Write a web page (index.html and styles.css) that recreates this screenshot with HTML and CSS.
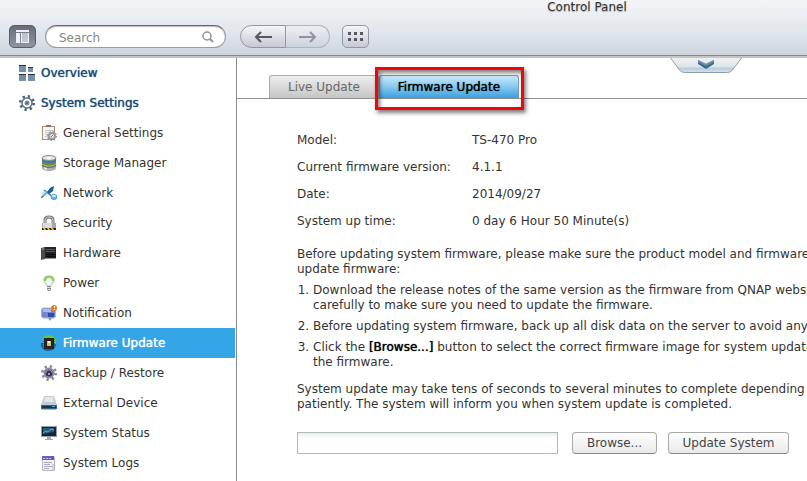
FILE: index.html
```html
<!DOCTYPE html>
<html lang="en">
<head>
    <meta charset="UTF-8">
    <meta name="viewport" content="width=device-width, initial-scale=1.0">
    <title>Control Panel</title>
    <link rel="stylesheet" href="styles.css">
</head>
<body>
    <div class="window">
        <header class="header">
            <h1 class="title">Control Panel</h1>
            <div class="toolbar">
                <button type="button" class="panel-toggle" aria-label="Toggle sidebar">
                    <svg width="13" height="13" viewBox="0 0 13 13"><path fill="#eef2f7" d="M0 0h13v2H0zM0 3h4v10H0zM5 3h1v9h6V3h1v10H5z"/><path fill="#dde2e9" d="M6 3h6v9H6z" opacity=".7"/></svg>
                </button>
                <div class="search">
                    <input type="text" class="search-input" placeholder="Search" aria-label="Search">
                    <svg class="search-icon" width="12" height="12" viewBox="0 0 12 12" fill="none" stroke="#8e9499"><circle cx="5" cy="5" r="4" stroke-width="1.500"/><path d="M8 8l3 3" stroke-width="2"/></svg>
                </div>
                <div class="history">
                    <button type="button" class="back" aria-label="Back">
                        <svg width="18" height="12" viewBox="0 0 18 12" fill="none" stroke="#53575e" stroke-width="2"><path d="M1.500 6H18M7 1L2 6l5 5"/></svg>
                    </button>
                    <button type="button" class="forward" aria-label="Forward">
                        <svg width="18" height="12" viewBox="0 0 18 12" fill="none" stroke="#90959d" stroke-width="2"><path d="M0 6h16.500M11 1l5 5-5 5"/></svg>
                    </button>
                </div>
                <button type="button" class="all-apps" aria-label="Show all">
                    <svg width="15" height="9" viewBox="0 0 15 9" fill="#55595f"><path d="M0 0h3v3H0zM6 0h3v3H6zM12 0h3v3h-3zM0 6h3v3H0zM6 6h3v3H6zM12 6h3v3h-3z"/></svg>
                </button>
            </div>
        </header>

        <div class="main">
            <nav class="sidebar">
                <a href="#" class="group">
                    <svg class="icon" viewBox="0 0 16 16"><path fill="#7590a8" d="M0 0h7v7H0zM9 2h5v5H9zM0 9h7v7H0zM9 9h7v7H9z"/><path fill="#27333e" d="M0 0h7v1H0zM9 2h5v1H9zM0 9h7v1H0zM9 9h7v1H9z"/></svg>
                    Overview
                </a>
                <a href="#" class="group">
                    <svg class="icon" viewBox="0 0 16 16" fill="none"><circle cx="8" cy="8" r="6.500" stroke="#4d6175" stroke-width="3" stroke-dasharray="2.200 2.905"/><circle cx="8" cy="8" r="5" stroke="#5f7488" stroke-width="1.500"/><circle cx="8" cy="8" r="2" stroke="#4d6175"/><circle cx="8" cy="8" r="1" fill="#27333e"/></svg>
                    System Settings
                </a>
                <a href="#" class="item">
                    <svg class="icon" viewBox="0 0 16 16"><path fill="#b28a70" d="M1 1h13v14H1z"/><path fill="#f4f4f2" d="M2 2h11v12H2z"/><path fill="#777" d="M5 0h5v2H5z"/><path stroke="#c6c9cc" d="M4 5.500h8M4 7.500h5M4 9.500h4M4 11.500h3"/><circle cx="11" cy="11" r="3" fill="#eee" stroke="#999" stroke-width="2"/><circle cx="11" cy="11" r="4.500" fill="none" stroke="#777" stroke-dasharray="1.500 2.034"/><path stroke="#666" d="M10 12l2-2"/></svg>
                    General Settings
                </a>
                <a href="#" class="item">
                    <svg class="icon" viewBox="0 0 16 16"><path fill="#a9aeb1" d="M1 3v10c0 4 14 4 14 0V3z"/><path fill="#d39b24" d="M1 7v2c0 3 14 3 14 0V7z"/><path fill="#5a9a30" d="M1 5v3c0 3 14 3 14 0V5z"/><path fill="#4973aa" d="M1 4v2c0 3 14 3 14 0V4z"/><path fill="none" stroke="#55595c" d="M1 10c0 3 14 3 14 0"/><path fill="#e2e4e5" d="M3 12l3 1v2l-3-1z"/><ellipse cx="8" cy="3" rx="7" ry="2.500" fill="#e0e3e4" stroke="#8b8f92"/><ellipse cx="8" cy="3" rx="2" ry="1" fill="#fff"/></svg>
                    Storage Manager
                </a>
                <a href="#" class="item">
                    <svg class="icon" viewBox="0 0 16 16"><path fill="none" stroke="#2e73ac" stroke-width="1.500" d="M0 13L12 2M3 5l9 7"/><path fill="#91c9ed" d="M2 7l3-2 3 3-4 3H0z" opacity=".6"/><path fill="#1e5f99" d="M9 3l4-2-1 5-4 3-2-1z"/><ellipse cx="13" cy="12" rx="3" ry="2.500" fill="#69b8e8" stroke="#4a98d4"/><ellipse cx="13" cy="11" rx="2" ry="1" fill="#d5effc"/></svg>
                    Network
                </a>
                <a href="#" class="item">
                    <svg class="icon" viewBox="0 0 16 16"><path fill="none" stroke="#75797c" stroke-width="3" d="M4 9V5c0-4 8-4 8 0v4"/><path fill="none" stroke="#d5d7d8" d="M4 9V5c0-4 8-4 8 0v4"/><path fill="#a7aaac" d="M1 8h14v7H1z"/><path fill="#d8dadb" d="M2 8h9v5H2z"/><path fill="#26231d" d="M1 13h14v2H1z"/><path fill="#f1bb20" d="M2 13h2l1 2H3zM6 13h2l1 2H7zM10 13h2l1 2h-2z"/></svg>
                    Security
                </a>
                <a href="#" class="item">
                    <svg class="icon" viewBox="0 0 16 16"><path fill="#4a4c4e" d="M0 3l4-1v12l-4 1z"/><path fill="#a2a4a6" d="M1 4l2-1v1L1 5z"/><path fill="#222426" d="M4 2h11v12H4z"/><path stroke="#56595b" d="M5 4.500h9M5 6.500h9"/><path stroke="#111" d="M5 9.500h10M5 11.500h10M8 8v5M11 8v5"/><path fill="#919395" d="M4 13h11v1H4z"/></svg>
                    Hardware
                </a>
                <a href="#" class="item">
                    <svg class="icon" viewBox="0 0 16 16"><path fill="#8ed165" stroke="#8cc46e" d="M8 1C4 1 3 3 3 5c0 2 2 4 3 6h4c1-2 3-4 3-6 0-2-1-4-5-4z"/><path fill="#d9dcd8" d="M3 6h10c0 2-2 4-3 6H6C5 10 3 8 3 6z"/><path fill="#f3fbed" d="M8 3C6 3 5 4 5 6c0 1 1 3 2 4h2c1-1 2-3 2-4 0-2-1-3-3-3z"/><path fill="#858a86" d="M6 11h4v3l-1 2H7l-1-2z"/><path stroke="#dedede" d="M6 12.500h4M7 14.500h2"/></svg>
                    Power
                </a>
                <a href="#" class="item">
                    <svg class="icon" viewBox="0 0 16 16"><rect x="0.500" y="3" width="14" height="10" rx="2" fill="#7187cf" stroke="#aab5d8"/><path fill="#a9beef" d="M2 4h8v3H2z"/><path fill="#334aa8" d="M7 8h6v4H7z"/><path fill="#8994b5" d="M7 13h4l-2 3z"/><circle cx="13" cy="3" r="3" fill="#f07c1c"/><path stroke="#fff" d="M13.500 1v2M13.500 4v1"/></svg>
                    Notification
                </a>
                <a href="#" class="item selected">
                    <svg class="icon" viewBox="0 0 16 16"><path fill="none" stroke="#72c740" stroke-width="2" d="M2 5c2-5 9-5 12 0v3"/><path fill="none" stroke="#17639b" stroke-width="2" d="M14 9c-1 7-10 8-13 2V8"/><rect x="3" y="3" width="10" height="11" fill="#27231e"/><path stroke="#79674a" stroke-dasharray="1 1" d="M2.500 4v9M13.500 4v9"/><path fill="#d7b982" d="M6 6h4v5H6z"/><path fill="#fff0cb" d="M7 6h2v2H7z"/></svg>
                    Firmware Update
                </a>
                <a href="#" class="item">
                    <svg class="icon" viewBox="0 0 16 16" fill="none"><circle cx="8" cy="8" r="6.500" stroke="#888a92" stroke-width="3" stroke-dasharray="2.200 2.905"/><circle cx="8" cy="8" r="4.500" fill="#343154" stroke="#8e9099" stroke-width="2"/><path stroke="#8f86cc" d="M5 8a3 3 0 0 1 6 0"/><circle cx="8" cy="9" r="1" fill="#c5c0ed"/></svg>
                    Backup / Restore
                </a>
                <a href="#" class="item">
                    <svg class="icon" viewBox="0 0 16 16"><path fill="#c3ccd5" d="M3 1h10l3 9H0z"/><path fill="#e2e7ec" d="M4 2h8l1 5H3z"/><path fill="#3e6282" d="M0 10h16v4H0z"/><path fill="#18344e" d="M1 11h14v2H1z"/><path fill="#4ca8d8" d="M11 11h3v1h-3z"/><path fill="#adb7c0" d="M1 14h14v1H1z"/></svg>
                    External Device
                </a>
                <a href="#" class="item">
                    <svg class="icon" viewBox="0 0 16 16"><path fill="#969da3" d="M0 1h16v11H0z"/><path fill="#182532" d="M1 2h14v9H1z"/><path fill="#225d83" d="M2 3h11v4L2 9z"/><path fill="none" stroke="#40bcc5" d="M2 8l3-2 2 1 3-3 3 1"/><path fill="#a6abae" d="M6 12h4v2H6zM4 14h8v1H4z"/></svg>
                    System Status
                </a>
                <a href="#" class="item">
                    <svg class="icon" viewBox="0 0 16 16"><path fill="#f0f0f5" stroke="#b4b4c2" d="M1.500 2v13.500h12V2z"/><path fill="#7358bd" d="M1 1h12v4H1z"/><path stroke="#c8bae9" stroke-dasharray="2 1" d="M2 3.500h9"/><path stroke="#a9acb8" d="M3 7.500h8M3 9.500h6M3 11.500h8M3 13.500h5"/><path fill="#d0d1dc" d="M11 9h2v6h-2z"/></svg>
                    System Logs
                </a>
            </nav>

            <main class="content">
                <button type="button" class="drawer" aria-label="Expand">
                    <svg width="72" height="16" viewBox="0 0 72 16">
                        <defs>
                            <linearGradient id="drawer-fill" x2="0" y2="1">
                                <stop offset="0" stop-color="#eef1f3"/>
                                <stop offset=".6" stop-color="#dde5ea"/>
                                <stop offset=".7" stop-color="#b9cbd8"/>
                                <stop offset="1" stop-color="#d5e2eb"/>
                            </linearGradient>
                        </defs>
                        <path fill="url(#drawer-fill)" stroke="#8b9eae" d="M.500 0l9 12q2 2.500 5 2.500h43q3 0 5-2.500l9-12"/>
                        <path fill="#376c91" d="M28 2l8 4 8-4v4l-8 5-8-5z"/>
                        <path fill="#718d9e" d="M28 2l8 4 8-4v2l-8 4-8-4z"/>
                    </svg>
                </button>

                <div class="tabs">
                    <button type="button" class="tab">Live Update</button>
                    <div class="marked">
                        <button type="button" class="tab active">Firmware Update</button>
                    </div>
                </div>

                <div class="page">
                    <dl class="info">
                        <dt>Model:</dt>
                        <dd>TS-470 Pro</dd>
                        <dt>Current firmware version:</dt>
                        <dd>4.1.1</dd>
                        <dt>Date:</dt>
                        <dd>2014/09/27</dd>
                        <dt>System up time:</dt>
                        <dd>0 day 6 Hour 50 Minute(s)</dd>
                    </dl>

                    <p>Before updating system firmware, please make sure the product model and firmware<br>update firmware:</p>
                    <ol class="steps">
                        <li>Download the release notes of the same version as the firmware from QNAP website<br>carefully to make sure you need to update the firmware.</li>
                        <li>Before updating system firmware, back up all disk data on the server to avoid any</li>
                        <li>Click the <b>[Browse...]</b> button to select the correct firmware image for system update<br>the firmware.</li>
                    </ol>
                    <p>System update may take tens of seconds to several minutes to complete depending<br>patiently. The system will inform you when system update is completed.</p>

                    <form class="upload">
                        <input type="text" class="file-name" aria-label="Firmware image">
                        <button type="button" class="btn browse">Browse...</button>
                        <button type="button" class="btn update">Update System</button>
                    </form>
                </div>
            </main>
        </div>
    </div>
</body>
</html>
```

FILE: styles.css
```css
* {
    box-sizing: border-box;
    margin: 0;
    padding: 0;
}

body {
    min-height: 100vh;
    overflow: hidden;
    background: white;
    color: #333;
    font-family: Verdana, "DejaVu Sans", sans-serif;
    font-size: 12px;
    line-height: 15px;
}

button, input {
    font: inherit;
    color: inherit;
}

button {
    display: flex;
    align-items: center;
    justify-content: center;
    cursor: pointer;
}

/* the desktop window never gets narrower than this */
.window {
    min-width: 1174px;
    min-height: 100vh;
    display: flex;
    flex-direction: column;
}

.header {
    position: relative;
    z-index: 1;
    height: 56px;
    background: linear-gradient(to bottom, #f4f5f7, #e1e7ee 55%, #ced5de);
    border-bottom: 1px solid #858b91;
    box-shadow: 0 2px 0 #c4c4c4;
}

.title {
    height: 25px;
    font-size: 12px;
    font-weight: normal;
    line-height: 15px;
    text-align: center;
    text-shadow: 0 1px 1px #aaa;
}

.toolbar {
    display: flex;
    padding-left: 9px;
}

.toolbar button {
    height: 23px;
    border: 1px solid #9297a3;
    background: linear-gradient(to bottom, #f4f6f8, #c5cad3);
}

.toolbar .panel-toggle {
    width: 27px;
    border-color: #5a606a;
    border-radius: 5px;
    background: linear-gradient(to bottom, #686e78, #8f96a1);
}

.search {
    display: flex;
    align-items: center;
    width: 181px;
    height: 23px;
    margin: 0 14px 0 9px;
    padding: 0 11px 0 13px;
    background: white;
    border: 1px solid #9a9da1;
    border-top-color: #65686c;
    border-radius: 12px;
    box-shadow: inset 0 1px 1px #bbb;
}

.search-input {
    flex: 1;
    min-width: 0;
    padding-top: 4px;
    border: 0;
    outline: none;
    background: transparent;
}

.search-input::placeholder {
    color: #888;
}

.history {
    display: flex;
    margin-right: 12px;
}

.toolbar .back {
    width: 46px;
    border-radius: 12px 0 0 12px;
}

.toolbar .forward {
    width: 44px;
    border-color: #b0b5bf;
    border-left: 0;
    border-radius: 0 12px 12px 0;
    background: linear-gradient(to bottom, #edf0f3, #cdd3db);
}

.toolbar .all-apps {
    width: 27px;
    border-radius: 5px;
}

.main {
    flex: 1;
    display: flex;
    padding-top: 2px;
}

.sidebar {
    width: 237px;
    padding-right: 1px;
    border-right: 1px solid #888;
}

.sidebar a {
    display: flex;
    align-items: center;
    gap: 6px;
    height: 30px;
    color: #333;
    text-decoration: none;
}

.sidebar .group {
    padding-left: 19px;
    color: #1c4b74;
    text-shadow: 0 0 1px #1c4b74;
}

.sidebar .item {
    padding-left: 41px;
}

.sidebar .selected {
    background: #34a5e7;
    color: white;
    text-shadow: 0 0 1px white;
}

.icon {
    width: 16px;
    height: 16px;
}

.content {
    position: relative;
    flex: 1;
    padding-top: 17px;
}

/* pull-down handle hanging over the tab row */
.drawer {
    position: absolute;
    top: 0;
    left: calc(50% - 36px);
    border: 0;
    background: transparent;
}

.tabs {
    display: flex;
    height: 24px;
    padding-left: 32px;
    border-bottom: 1px solid #8f8f8f;
}

.tab {
    height: 23px;
    padding: 0 18px;
    border: 1px solid #aaa;
    border-bottom: 0;
    border-radius: 3px 3px 0 0;
    background: linear-gradient(to bottom, #eee, #c5c5c5);
    color: #666;
}

.tab.active {
    border-color: #6b9fbd;
    background: linear-gradient(to bottom, #c9e8fa, #85c8f0 50%, #38a0dc);
    color: black;
    text-shadow: 0 0 1px black;
}

.marked {
    position: relative;
}

.marked::after {
    content: "";
    position: absolute;
    top: -8px;
    right: -5px;
    bottom: -12px;
    left: -4px;
    border: 3px solid #fb0007;
    box-shadow: 2px 3px 4px rgba(0, 0, 0, .5), inset 2px 3px 4px rgba(0, 0, 0, .5);
    pointer-events: none;
}

.page {
    padding: 28px 60px;
    white-space: nowrap;
}

.info {
    display: grid;
    grid-template-columns: 175px 1fr;
    line-height: 27px;
    margin-bottom: 12px;
}

.steps {
    list-style-position: outside;
    padding-left: 16px;
    margin: 6px 0 12px;
}

.steps li + li {
    margin-top: 6px;
}

.steps b {
    color: black;
    font-weight: normal;
    text-shadow: 0 0 1px black;
}

.upload {
    display: flex;
    margin-top: 20px;
}

.file-name {
    width: 261px;
    height: 22px;
    margin-right: 14px;
    padding: 0 4px;
    border: 1px solid #b5b8b8;
    background: linear-gradient(to bottom, #eceff0, white 6px);
}

.btn {
    height: 22px;
    border: 1px solid #aaa;
    border-bottom-color: #888;
    border-radius: 4px;
    background: linear-gradient(to bottom, white, #e9e9e9);
    color: #444;
}

.browse {
    width: 85px;
    margin-right: 11px;
}

.update {
    width: 121px;
}
```
